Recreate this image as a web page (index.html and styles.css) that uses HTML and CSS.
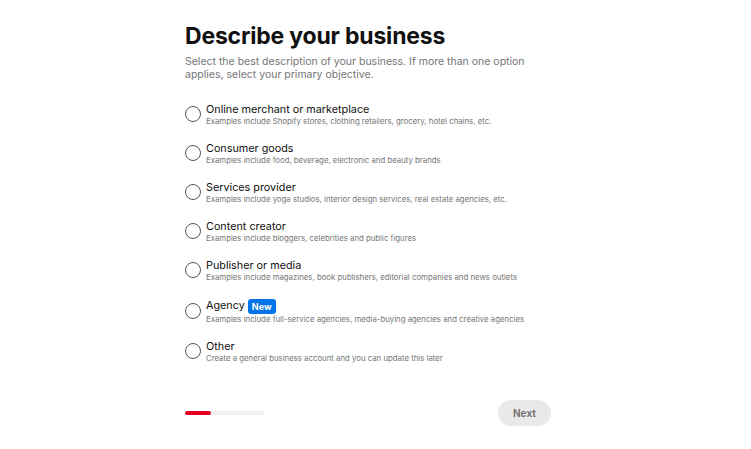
FILE: index.html
```html
<!DOCTYPE html>
<html>
<head>
	<title>Describe your business</title>
	<link rel="stylesheet" href="styles.css">
</head>
<body>
	<div class="page">
		<h1 class="title">Describe your business</h1>
		<p class="subtitle">Select the best description of your business. If more than one option applies, select your primary objective.</p>

		<div class="options">
			<label class="option">
				<span class="radio"></span>
				<span class="option-text">
					<span class="option-name">Online merchant or marketplace</span>
					<span class="option-desc">Examples include Shopify stores, clothing retailers, grocery, hotel chains, etc.</span>
				</span>
			</label>
			<label class="option">
				<span class="radio"></span>
				<span class="option-text">
					<span class="option-name">Consumer goods</span>
					<span class="option-desc">Examples include food, beverage, electronic and beauty brands</span>
				</span>
			</label>
			<label class="option">
				<span class="radio"></span>
				<span class="option-text">
					<span class="option-name">Services provider</span>
					<span class="option-desc">Examples include yoga studios, interior design services, real estate agencies, etc.</span>
				</span>
			</label>
			<label class="option">
				<span class="radio"></span>
				<span class="option-text">
					<span class="option-name">Content creator</span>
					<span class="option-desc">Examples include bloggers, celebrities and public figures</span>
				</span>
			</label>
			<label class="option">
				<span class="radio"></span>
				<span class="option-text">
					<span class="option-name">Publisher or media</span>
					<span class="option-desc">Examples include magazines, book publishers, editorial companies and news outlets</span>
				</span>
			</label>
			<label class="option option-badge">
				<span class="radio"></span>
				<span class="option-text">
					<span class="option-name">Agency <span class="badge">New</span></span>
					<span class="option-desc">Examples include full-service agencies, media-buying agencies and creative agencies</span>
				</span>
			</label>
			<label class="option">
				<span class="radio"></span>
				<span class="option-text">
					<span class="option-name">Other</span>
					<span class="option-desc">Create a general business account and you can update this later</span>
				</span>
			</label>
		</div>

		<div class="footer">
			<div class="progress"><div class="progress-fill"></div></div>
			<button class="next">Next</button>
		</div>
	</div>
</body>
</html>
```

FILE: styles.css
```css
body {
	margin: 0;
	background: #fff;
	font-family: Inter, "Noto Sans", sans-serif;
	color: #111;
}
.page {
	width: 366px;
	padding: 20px 0 0 185px;
}
.title {
	margin: 0;
	font-size: 23px;
	line-height: 32px;
	font-weight: 700;
	letter-spacing: -0.2px;
}
.subtitle {
	margin: 3px 0 0;
	font-size: 10.5px;
	line-height: 13px;
	color: #767676;
	width: 345px;
}
.options {
	display: flex;
	flex-direction: column;
	gap: 15px;
	margin-top: 21px;
}
.option {
	display: flex;
	align-items: center;
	gap: 5px;
	cursor: pointer;
}
.radio {
	width: 14px;
	height: 14px;
	border: 1.5px solid #555;
	border-radius: 50%;
	flex: none;
}
.option-text {
	display: flex;
	flex-direction: column;
}
.option-name {
	font-size: 10.8px;
	line-height: 15px;
	display: flex;
	align-items: center;
	gap: 3px;
}
.option-desc {
	font-size: 7.8px;
	line-height: 9px;
	color: #767676;
}
.badge {
	background: #0074e8;
	color: #fff;
	font-size: 9px;
	font-weight: 700;
	line-height: 15px;
	padding: 0 4px;
	border-radius: 3px;
}
.option-badge .option-name {
	line-height: 18px;
}
.footer {
	display: flex;
	align-items: center;
	justify-content: space-between;
	margin-top: 37px;
}
.progress {
	width: 80px;
	height: 4px;
	border-radius: 2px;
	background: #efefef;
}
.progress-fill {
	width: 26px;
	height: 4px;
	border-radius: 2px;
	background: #e60023;
}
.next {
	width: 53px;
	height: 26px;
	border: none;
	border-radius: 13px;
	background: #e9e9e9;
	color: #767676;
	font-family: inherit;
	font-size: 10px;
	font-weight: 700;
}
```
